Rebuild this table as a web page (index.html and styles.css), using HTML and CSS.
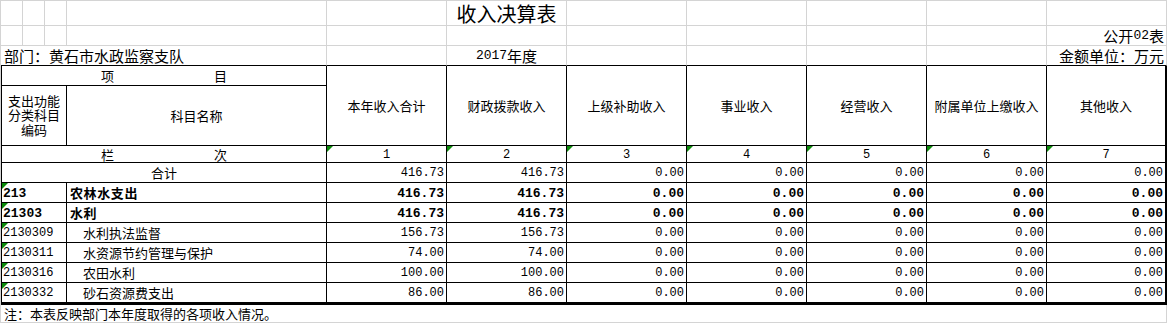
FILE: index.html
```html
<!DOCTYPE html>
<html lang="zh-CN">
<head>
<meta charset="utf-8">
<title>收入决算表</title>
<link rel="stylesheet" href="styles.css">
</head>
<body>
<div class="sheet">
  <!-- row 1 -->
  <div class="g"></div><div class="g"></div><div class="g"></div><div class="g"></div><div class="g"></div>
  <div class="g title">收入决算表</div>
  <div class="g"></div><div class="g"></div><div class="g"></div><div class="g"></div><div class="g"></div>
  <!-- row 2 -->
  <div class="g"></div><div class="g"></div><div class="g"></div><div class="g"></div><div class="g"></div><div class="g"></div>
  <div class="g"></div><div class="g"></div><div class="g"></div><div class="g"></div>
  <div class="g info right">公开<span class="lat">02</span>表</div>
  <!-- row 3 -->
  <div class="g info edge span4 left">部门：黄石市水政监察支队</div>
  <div class="g edge"></div>
  <div class="g info edge center"><span class="lat">2017</span>年度</div>
  <div class="g edge"></div><div class="g edge"></div><div class="g edge"></div><div class="g edge"></div>
  <div class="g info edge right">金额单位：万元</div>
  <!-- row 4/5 header -->
  <div class="t head span4 first spaced"><span>项</span><span>目</span></div>
  <div class="t head tall">本年收入合计</div>
  <div class="t head tall">财政拨款收入</div>
  <div class="t head tall">上级补助收入</div>
  <div class="t head tall">事业收入</div>
  <div class="t head tall">经营收入</div>
  <div class="t head tall">附属单位上缴收入</div>
  <div class="t head tall last">其他收入</div>
  <div class="t head span3 first wrap">支出功能分类科目编码</div>
  <div class="t head">科目名称</div>
  <!-- row 栏次 -->
  <div class="t head span4 first spaced"><span>栏</span><span>次</span></div>
  <div class="t num center tri">1</div>
  <div class="t num center tri">2</div>
  <div class="t num center tri">3</div>
  <div class="t num center tri">4</div>
  <div class="t num center tri">5</div>
  <div class="t num center tri">6</div>
  <div class="t num center tri last">7</div>
  <!-- 合计 -->
  <div class="t head span4 first">合计</div>
  <div class="t num right">416.73</div>
  <div class="t num right">416.73</div>
  <div class="t num right">0.00</div>
  <div class="t num right">0.00</div>
  <div class="t num right">0.00</div>
  <div class="t num right">0.00</div>
  <div class="t num right last">0.00</div>
  <!-- 213 -->
  <div class="t num code span3 first tri bold">213</div>
  <div class="t name bold">农林水支出</div>
  <div class="t num right bold">416.73</div>
  <div class="t num right bold">416.73</div>
  <div class="t num right bold">0.00</div>
  <div class="t num right bold">0.00</div>
  <div class="t num right bold">0.00</div>
  <div class="t num right bold">0.00</div>
  <div class="t num right bold last">0.00</div>
  <!-- 21303 -->
  <div class="t num code span3 first tri bold">21303</div>
  <div class="t name bold">水利</div>
  <div class="t num right bold">416.73</div>
  <div class="t num right bold">416.73</div>
  <div class="t num right bold">0.00</div>
  <div class="t num right bold">0.00</div>
  <div class="t num right bold">0.00</div>
  <div class="t num right bold">0.00</div>
  <div class="t num right bold last">0.00</div>
  <!-- 2130309 -->
  <div class="t num code span3 first tri">2130309</div>
  <div class="t name sub">水利执法监督</div>
  <div class="t num right">156.73</div>
  <div class="t num right">156.73</div>
  <div class="t num right">0.00</div>
  <div class="t num right">0.00</div>
  <div class="t num right">0.00</div>
  <div class="t num right">0.00</div>
  <div class="t num right last">0.00</div>
  <!-- 2130311 -->
  <div class="t num code span3 first tri">2130311</div>
  <div class="t name sub">水资源节约管理与保护</div>
  <div class="t num right">74.00</div>
  <div class="t num right">74.00</div>
  <div class="t num right">0.00</div>
  <div class="t num right">0.00</div>
  <div class="t num right">0.00</div>
  <div class="t num right">0.00</div>
  <div class="t num right last">0.00</div>
  <!-- 2130316 -->
  <div class="t num code span3 first tri">2130316</div>
  <div class="t name sub">农田水利</div>
  <div class="t num right">100.00</div>
  <div class="t num right">100.00</div>
  <div class="t num right">0.00</div>
  <div class="t num right">0.00</div>
  <div class="t num right">0.00</div>
  <div class="t num right">0.00</div>
  <div class="t num right last">0.00</div>
  <!-- 2130332 -->
  <div class="t num code span3 first tri bottom">2130332</div>
  <div class="t name sub bottom">砂石资源费支出</div>
  <div class="t num right bottom">86.00</div>
  <div class="t num right bottom">86.00</div>
  <div class="t num right bottom">0.00</div>
  <div class="t num right bottom">0.00</div>
  <div class="t num right bottom">0.00</div>
  <div class="t num right bottom">0.00</div>
  <div class="t num right bottom last">0.00</div>
  <!-- note -->
  <div class="g note spanall">注：本表反映部门本年度取得的各项收入情况。</div>
</div>
</body>
</html>
```
FILE: styles.css
```css
* {
  box-sizing: border-box;
  margin: 0;
  padding: 0;
}

body {
  margin: 0;
  background: #ffffff;
  color: #000000;
  font-family: "Noto Sans CJK SC", "Noto Sans", sans-serif;
}

.sheet {
  display: grid;
  grid-template-columns: 22px 22px 22px 260px repeat(7, 120px);
  grid-template-rows: 25px 20px 20px 20px 60px 17px 20px repeat(5, 20px) 22px 18px;
  width: 1167px;
  border-left: 1px solid #d4d4d4;
  border-top: 1px solid #d4d4d4;
}

.g {
  border-right: 1px solid #d4d4d4;
  border-bottom: 1px solid #d4d4d4;
  display: flex;
  align-items: center;
  white-space: nowrap;
  min-width: 0;
}

.t {
  position: relative;
  border-right: 1px solid #000000;
  border-bottom: 1px solid #000000;
  display: flex;
  align-items: center;
  white-space: nowrap;
  min-width: 0;
  line-height: 1;
}

.span3 { grid-column: span 3; }
.span4 { grid-column: span 4; }
.spanall { grid-column: 1 / -1; }
.tall { grid-row: span 2; }

.edge { border-bottom-color: #000000; }
.first { border-left: 1px solid #000000; }
.last { border-right-width: 2px; }
.bottom { border-bottom-width: 3px; }

.title {
  justify-content: center;
  font-size: 20px;
  line-height: 1;
  padding-top: 2px;
}

.info {
  font-size: 15px;
  line-height: 1;
}

.lat {
  font-family: "Liberation Mono", monospace;
  font-size: 13px;
}

.left { justify-content: flex-start; padding-left: 3px; }
.center { justify-content: center; }
.right { justify-content: flex-end; padding-right: 2px; }

.head {
  justify-content: center;
  text-align: center;
  font-size: 13px;
}

.spaced { gap: 100px; }

.wrap {
  white-space: normal;
  line-height: 14.5px;
  padding: 0 5px;
}

.num {
  font-family: "Liberation Mono", "Noto Sans CJK SC", monospace;
  font-size: 12px;
  padding-top: 1px;
}

.num.bold {
  font-size: 13px;
  font-weight: 700;
}

.code {
  justify-content: flex-start;
  padding-left: 1px;
}

.name {
  font-size: 13px;
  padding-left: 16px;
}

.name.bold {
  font-weight: 700;
  padding-left: 3px;
  letter-spacing: 0.6px;
}

.tri::before {
  content: "";
  position: absolute;
  left: 0;
  top: 0;
  border-top: 6px solid #0a8a0a;
  border-right: 6px solid transparent;
}

.note {
  font-size: 13px;
  line-height: 1;
  padding-left: 3px;
}
```
